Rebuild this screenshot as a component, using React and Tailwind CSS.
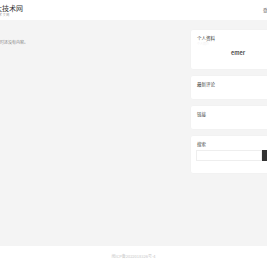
import React from 'react';

const Card = ({ title, className = '', children }) => (
  <div className={`bg-white rounded-[2px] shadow-[0_0_2px_rgba(0,0,0,0.03)] px-[6px] ${className}`}>
    <div className="text-[4.5px] leading-[6px] text-[#444] pt-[5px]">{title}</div>
    {children}
  </div>
);

const App = () => {
  return (
    <div
      className="w-[267px] h-[266px] overflow-hidden bg-white flex flex-col"
      style={{ fontFamily: '"Noto Sans CJK SC", "Liberation Sans", sans-serif' }}
    >
      {/* header */}
      <header className="h-[20px] shrink-0 flex items-start bg-white">
        <div className="-ml-[5px] pt-[4px]">
          <div className="text-[7px] leading-[9px] text-[#333] whitespace-nowrap">大技术网</div>
          <div className="text-[3px] leading-[4px] text-[#999] whitespace-nowrap ml-[1px]">技术 文 网</div>
        </div>
        <div className="ml-auto pt-[7px] text-[4.5px] leading-[6px] text-[#555] whitespace-nowrap -mr-[5px]">
          登录
        </div>
      </header>

      {/* body */}
      <main className="h-[226px] shrink-0 bg-[#f4f4f4] flex">
        <div className="flex-1 pt-[19px] -ml-[4px]">
          <p className="text-[4px] leading-[6px] text-[#888] whitespace-nowrap">暂时还没有内容。</p>
        </div>
        <aside className="w-[100px] shrink-0 -mr-[24px] pt-[10px] flex flex-col gap-[7px]">
          <Card title="个人资料" className="h-[39px]">
            <div className="text-[3px] leading-[4px] text-[#f0f0f0] mt-[1px]">个人简介</div>
            <div className="text-[5.5px] leading-[7px] font-semibold text-[#555] pl-[34px] mt-[4px]">emer</div>
          </Card>
          <Card title="最新评论" className="h-[23px]" />
          <Card title="链接" className="h-[23px]" />
          <Card title="搜索" className="h-[37px]">
            <div className="flex mt-[3px] h-[11px]">
              <input
                type="text"
                className="w-[66px] -ml-[1px] h-full border border-[#eee] bg-white outline-none text-[4px]"
              />
              <button className="flex-1 h-full bg-[#333]" />
            </div>
          </Card>
        </aside>
      </main>

      {/* footer */}
      <footer className="flex-1 bg-white flex items-center justify-center">
        <span className="text-[4px] leading-[5px] text-[#c8c8c8] whitespace-nowrap">闽ICP备2022018326号-4</span>
      </footer>
    </div>
  );
};

export default App;
